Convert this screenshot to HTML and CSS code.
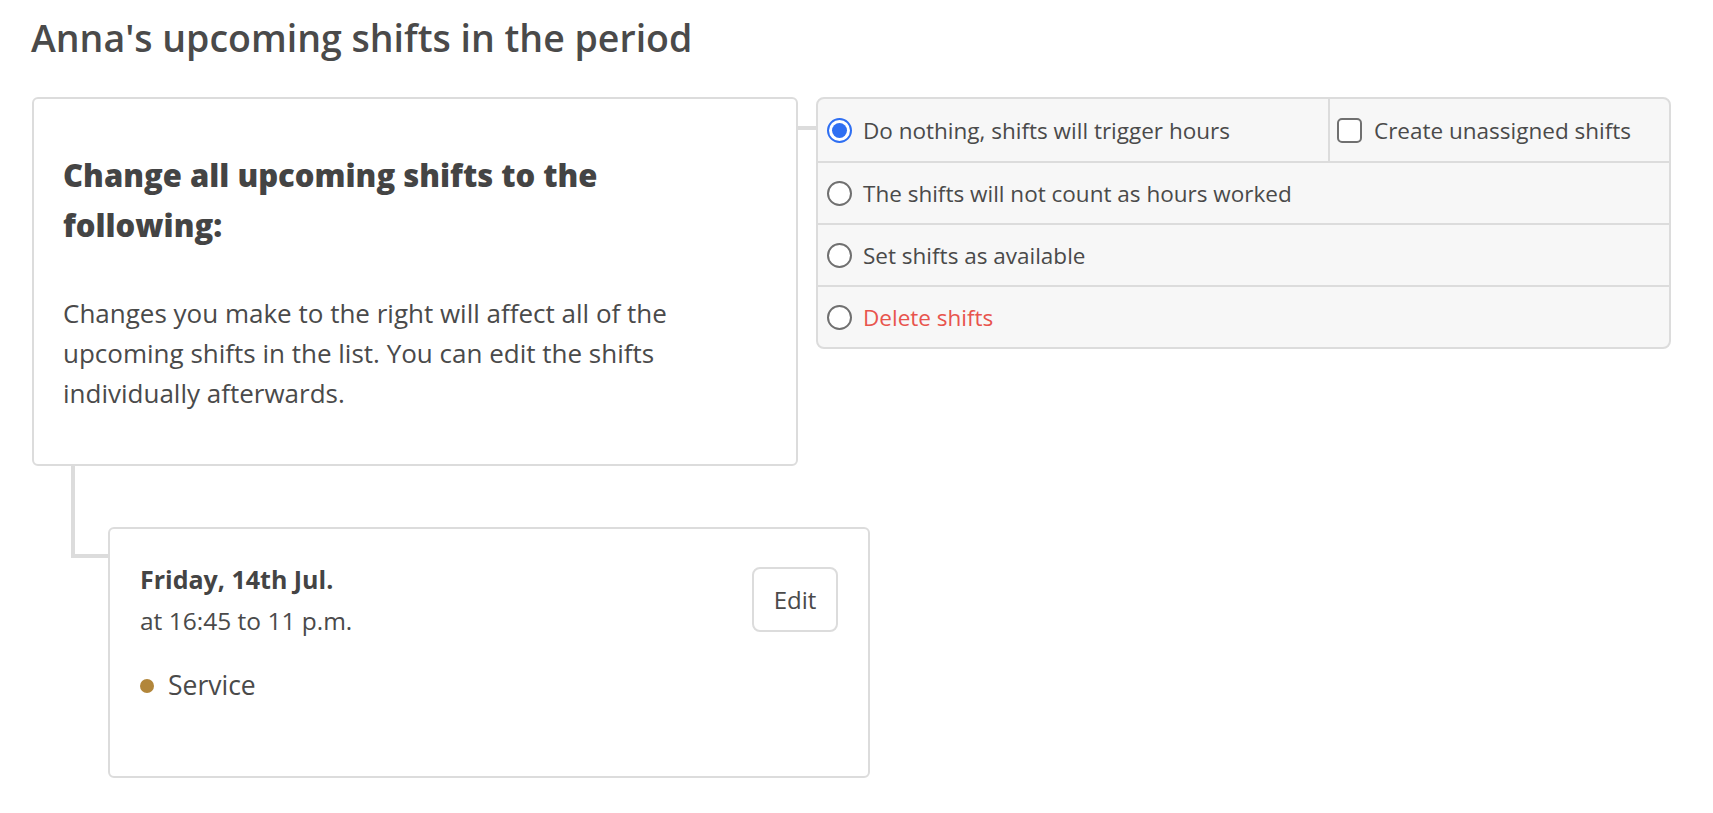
FILE: index.html
```html
<!DOCTYPE html>
<html lang="en">
<head>
<meta charset="utf-8">
<title>Anna's upcoming shifts</title>
<link rel="stylesheet" href="styles.css">
</head>
<body>
<div class="page">
  <h1 class="title">Anna's upcoming shifts in the period</h1>

  <div class="top">
    <div class="intro-card">
      <h2 class="intro-heading">Change all upcoming shifts to the following:</h2>
      <p class="intro-text">Changes you make to the right will affect all of the upcoming shifts in the list. You can edit the shifts individually afterwards.</p>
    </div>
    <div class="link-h"></div>
    <div class="options">
      <div class="opt-row first">
        <label class="opt opt-main">
          <span class="radio checked"></span>
          <span class="opt-label">Do nothing, shifts will trigger hours</span>
        </label>
        <label class="opt opt-side">
          <span class="checkbox"></span>
          <span class="opt-label">Create unassigned shifts</span>
        </label>
      </div>
      <div class="opt-row">
        <label class="opt">
          <span class="radio"></span>
          <span class="opt-label">The shifts will not count as hours worked</span>
        </label>
      </div>
      <div class="opt-row">
        <label class="opt">
          <span class="radio"></span>
          <span class="opt-label">Set shifts as available</span>
        </label>
      </div>
      <div class="opt-row last">
        <label class="opt">
          <span class="radio"></span>
          <span class="opt-label danger">Delete shifts</span>
        </label>
      </div>
    </div>
  </div>

  <div class="bottom">
    <div class="link-elbow"></div>
    <div class="shift-card">
      <div class="shift-info">
        <div class="shift-date">Friday, 14th Jul.</div>
        <div class="shift-time">at 16:45 to 11 p.m.</div>
        <div class="shift-type"><span class="dot"></span>Service</div>
      </div>
      <button class="edit-btn">Edit</button>
    </div>
  </div>
</div>
</body>
</html>
```

FILE: styles.css
```css
* { box-sizing: border-box; }

html, body {
  margin: 0;
  padding: 0;
  background: #ffffff;
}

body {
  font-family: "Open Sans", "Liberation Sans", sans-serif;
  color: #4a4a4a;
}

.page {
  padding: 16px 0 0 31px;
}

.title {
  margin: 0 0 37px 0;
  font-size: 37.5px;
  line-height: 44px;
  font-weight: 600;
  color: #4a4a4a;
}

.top {
  display: flex;
  align-items: flex-start;
  padding-left: 1px;
}

.intro-card {
  width: 766px;
  border: 2px solid #dcdcdc;
  border-radius: 6px;
  padding: 51px 30px 51px 29px;
  background: #fff;
}

.intro-heading {
  margin: 0;
  max-width: 640px;
  font-size: 31px;
  line-height: 50px;
  font-weight: 800;
  color: #444;
}

.intro-text {
  margin: 43px 0 0 0;
  font-size: 26px;
  line-height: 40px;
  font-weight: 400;
  color: #4a4a4a;
}

.link-h {
  width: 18px;
  height: 4px;
  margin-top: 29px;
  background: #dcdcdc;
}

.options {
  width: 855px;
  border: 2px solid #dcdcdc;
  border-radius: 8px;
  background: #f7f7f7;
  overflow: hidden;
}

.opt-row {
  display: flex;
  height: 62px;
  border-bottom: 2px solid #dcdcdc;
}

.opt-row.first {
  height: 64px;
}

.opt-row.last {
  border-bottom: 0;
  height: 60px;
}

.opt {
  display: flex;
  align-items: center;
  gap: 11px;
  padding-left: 9px;
  font-size: 22.5px;
  color: #4a4a4a;
  cursor: pointer;
}

.opt-main {
  width: 512px;
  border-right: 2px solid #dcdcdc;
}

.opt-side {
  flex: 1;
  padding-left: 7px;
  gap: 12px;
}

.radio {
  width: 25px;
  height: 25px;
  border: 2px solid #707070;
  border-radius: 50%;
  background: #fff;
  flex: none;
  position: relative;
}

.radio.checked {
  border-color: #2f6ff2;
}

.radio.checked::after {
  content: "";
  position: absolute;
  left: 3px;
  top: 3px;
  width: 15px;
  height: 15px;
  border-radius: 50%;
  background: #2f6ff2;
}

.checkbox {
  width: 25px;
  height: 25px;
  border: 2px solid #707070;
  border-radius: 5px;
  background: #fff;
  flex: none;
}

.danger {
  color: #e8544d;
}

.bottom {
  display: flex;
  align-items: flex-start;
  padding-left: 40px;
}

.link-elbow {
  width: 37px;
  height: 92px;
  border-left: 4px solid #dcdcdc;
  border-bottom: 4px solid #dcdcdc;
}

.shift-card {
  margin-top: 61px;
  width: 762px;
  border: 2px solid #dcdcdc;
  border-radius: 6px;
  padding: 30px 30px 70px 30px;
  display: flex;
  justify-content: space-between;
  align-items: flex-start;
  background: #fff;
}

.shift-date {
  font-size: 25px;
  line-height: 41px;
  font-weight: 700;
  color: #444;
}

.shift-time {
  font-size: 24.5px;
  line-height: 41px;
}

.shift-type {
  margin-top: 24px;
  font-size: 26.5px;
  line-height: 41px;
  display: flex;
  align-items: center;
}

.dot {
  width: 14px;
  height: 14px;
  border-radius: 50%;
  background: #b2863a;
  margin-right: 14px;
}

.edit-btn {
  margin-top: 8px;
  width: 86px;
  height: 65px;
  border: 2px solid #dcdcdc;
  border-radius: 8px;
  background: #fff;
  font-family: "Open Sans", "Liberation Sans", sans-serif;
  font-size: 24px;
  color: #4a4a4a;
  padding: 0;
  cursor: pointer;
}
```
